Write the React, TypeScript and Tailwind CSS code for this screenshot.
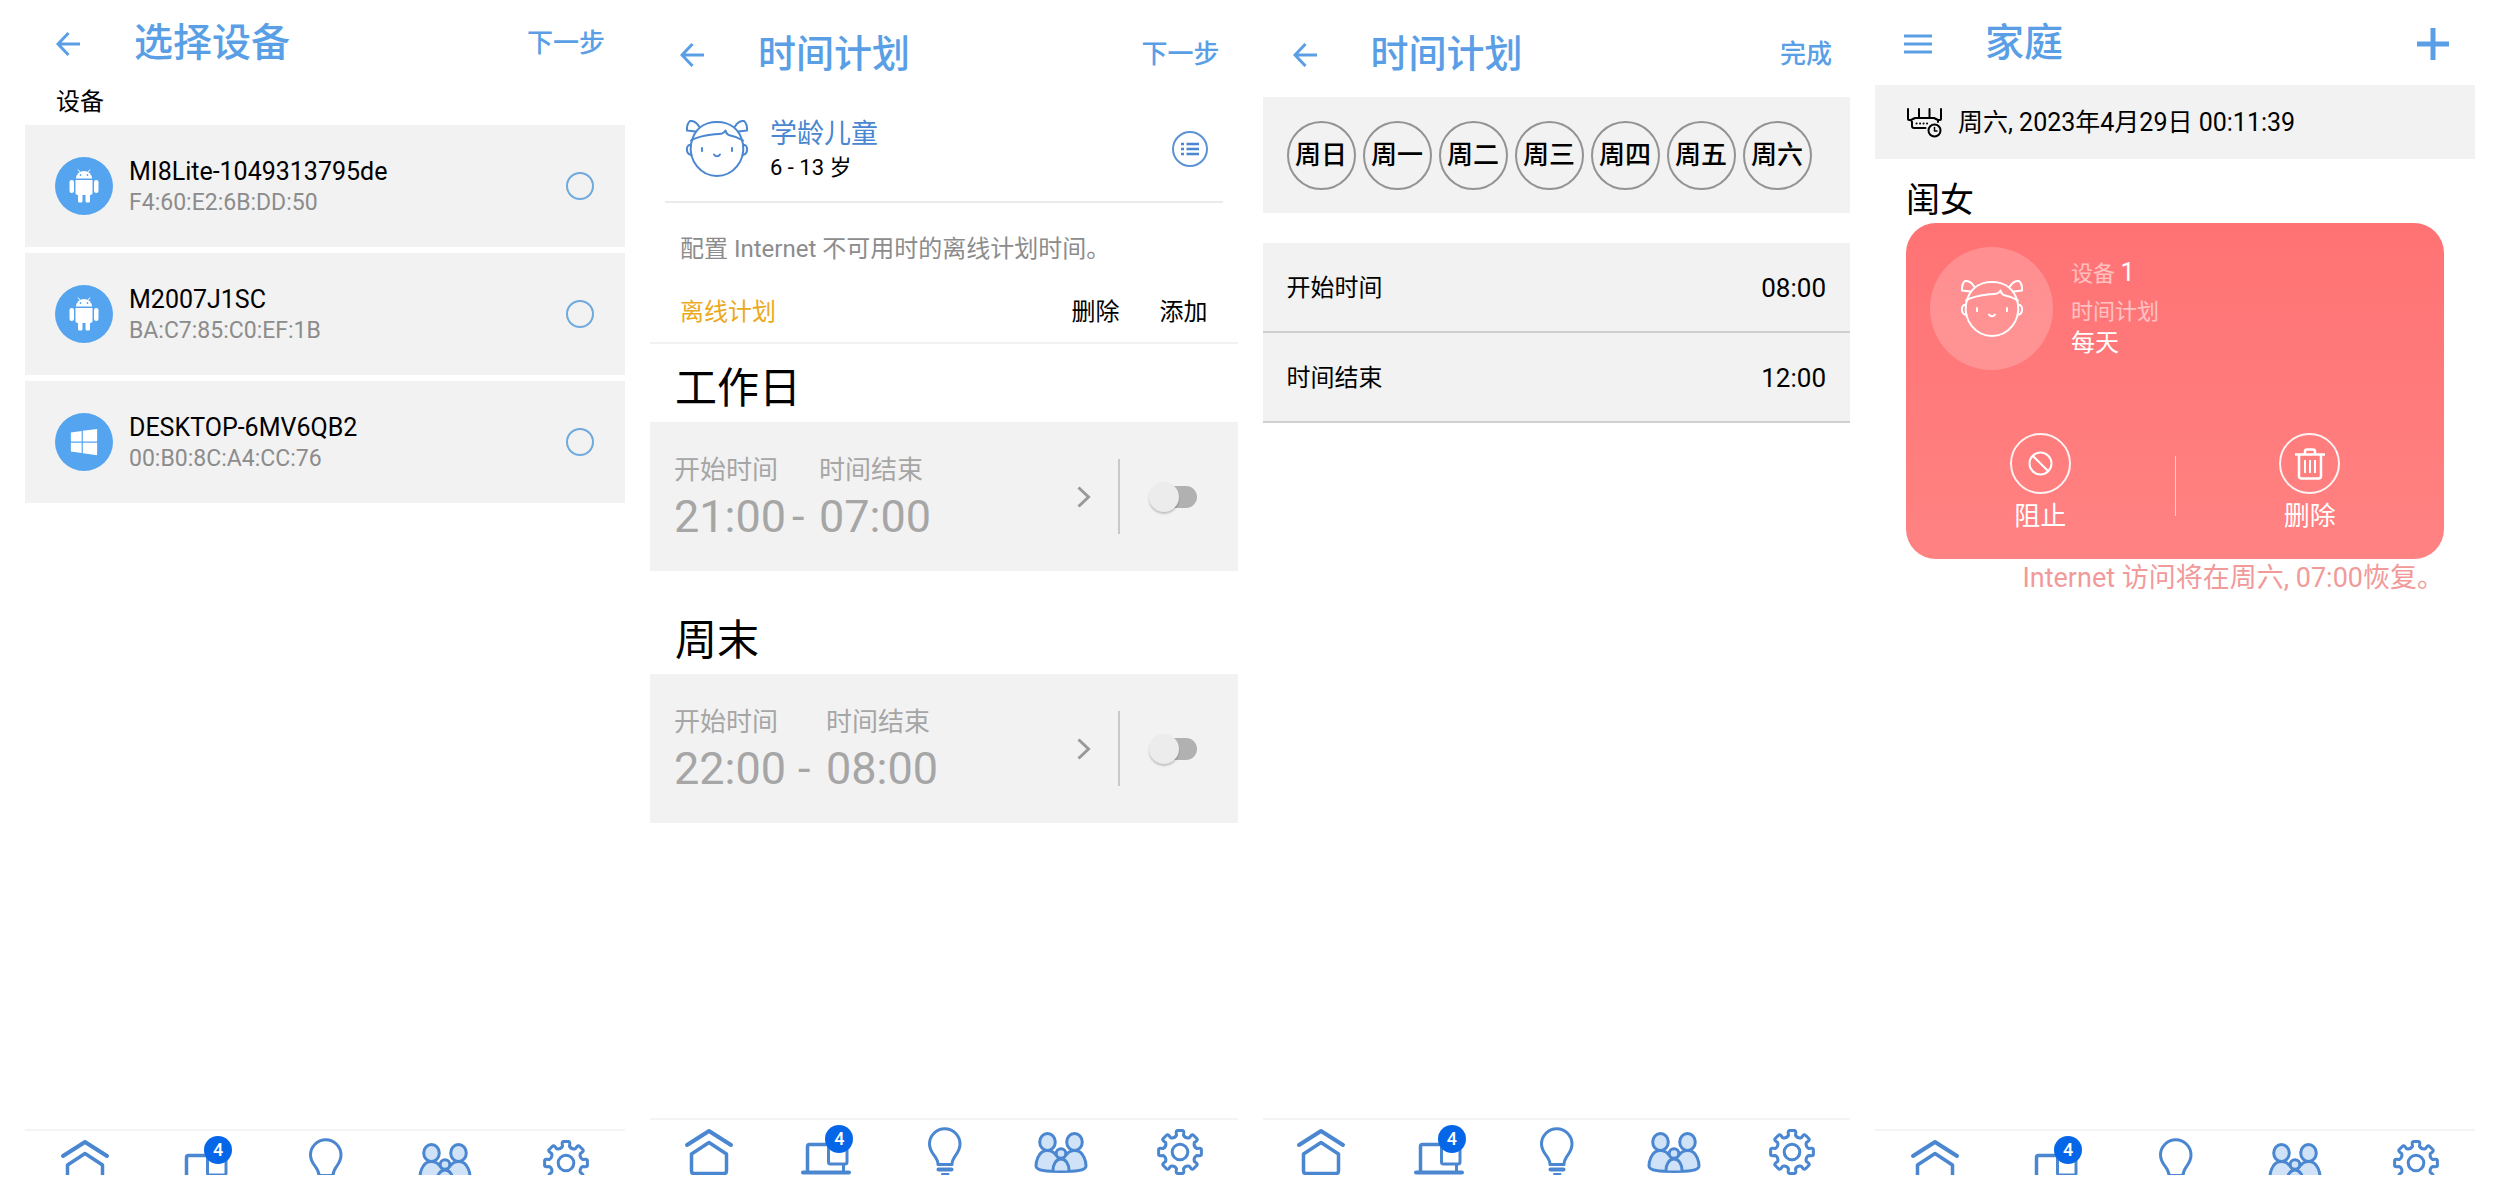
import { useState } from "react";
import type { ReactNode } from "react";
import clsx from "clsx";
import { FaWindows } from "react-icons/fa";

const devices = [
  { id: "d1", name: "MI8Lite-1049313795de", mac: "F4:60:E2:6B:DD:50", os: "android" },
  { id: "d2", name: "M2007J1SC", mac: "BA:C7:85:C0:EF:1B", os: "android" },
  { id: "d3", name: "DESKTOP-6MV6QB2", mac: "00:B0:8C:A4:CC:76", os: "windows" },
];

const plans = [
  { id: "workday", title: "工作日", start: "21:00", end: "07:00", cols: "grid-cols-[118px_27px_auto]" },
  { id: "weekend", title: "周末", start: "22:00", end: "08:00", cols: "grid-cols-[124px_28px_auto]" },
];

const weekdays = ["周日", "周一", "周二", "周三", "周四", "周五", "周六"];

// 8-tooth gear outline around (31, 25)
const gearPath = (() => {
  const pts: string[] = [];
  const at = (r: number, deg: number) => {
    const a = (deg * Math.PI) / 180;
    return `${(31 + r * Math.sin(a)).toFixed(2)} ${(25 - r * Math.cos(a)).toFixed(2)}`;
  };
  for (let i = 0; i < 8; i++) {
    const d = i * 45;
    pts.push(`${i ? "L" : "M"}${at(17, d - 12)} L${at(20, d - 11)} Q${at(21.8, d - 10)} ${at(21.5, d - 6)}`);
    pts.push(`L${at(21.5, d + 6)} Q${at(21.8, d + 10)} ${at(20, d + 11)} L${at(17, d + 12)}`);
    pts.push(`Q${at(14.5, d + 22.5)} ${at(17, d + 33)}`);
  }
  return pts.join(" ") + "Z";
})();

function BackIcon() {
  return (
    <svg width="24" height="24" viewBox="0 0 24 24" fill="none" stroke="currentColor" strokeWidth="3">
      <path d="M12.5 1 2 12l10.5 11M2 12h22" />
    </svg>
  );
}

function AndroidIcon() {
  return (
    <svg width="30" height="34" viewBox="0 0 30 34" fill="white">
      <path d="M7 9.500a8 7.500 0 0 1 16 0Z" />
      <path d="M9 0.500 11 3.500M21 0.500 19 3.500" stroke="white" strokeWidth="1" />
      <path d="M6.500 11h17v13q0 2-2 2h-13q-2 0-2-2Z" />
      <rect x="0.500" y="11" width="4.500" height="13" rx="2.200" />
      <rect x="25" y="11" width="4.500" height="13" rx="2.200" />
      <rect x="9" y="24" width="4.500" height="9.500" rx="1.500" />
      <rect x="16.500" y="24" width="4.500" height="9.500" rx="1.500" />
      <circle cx="11.500" cy="6" r="0.900" fill="#55a4f0" />
      <circle cx="18.500" cy="6" r="0.900" fill="#55a4f0" />
    </svg>
  );
}

function GirlFace() {
  return (
    <svg width="64" height="58" viewBox="0 0 64 58" fill="none" stroke="currentColor" strokeWidth="2" strokeLinejoin="round" strokeLinecap="round">
      <path d="M6 24C9 9 19 2 32 2s23 7 26 22c2.500 17-10 32-26 32S3.500 41 6 24Z" />
      <path d="M6 20.500C16 14.500 27 15 37 13.500q2-.5 3.500-3 .5 3 3 4.500C49 16 54 18 58 20.500" />
      <path d="M5.500 25C1 24 0 34 6.500 35M58.500 25c4.500-1 5.500 9-1 10" />
      <path d="M10.500 11.500 2 10.500Q1.500 4 5 1q5.500-.5 9 5.500M53.500 11.500l8.500-1Q62.500 4 59 1q-5.500-.5-9 5.500" />
      <path d="M17 28v3M47 28v3M29 34.500c1.500 2.300 4.500 2.300 6 0" />
    </svg>
  );
}

function RouterClockIcon() {
  return (
    <svg width="36" height="30" viewBox="0 0 36 30" fill="none" stroke="black" strokeWidth="2" strokeLinecap="round" strokeLinejoin="round">
      <path d="M1 1v10q0 1 1 1h2M12 1v8M22.500 1v8M34 1v10q0 1-1 1h-2" />
      <path d="M18.500 20H7q-2 0-2-2v-4l-1-2 4-2h19l4 2v2" />
      <path d="M9.500 15.500h.1M13 15.500h.1M16.500 15.500h.1M20 15.500h.1" />
      <circle cx="27.500" cy="22.500" r="6" />
      <path d="M27.500 19.500v3.500h2.500" strokeWidth="1.500" />
    </svg>
  );
}

const navStroke = {
  width: 60,
  height: 50,
  viewBox: "0 0 60 50",
  fill: "none",
  stroke: "#4a87d0",
  strokeWidth: 3,
  strokeLinecap: "round",
  strokeLinejoin: "round",
} as const;

const navItems: { label: string; icon: ReactNode; badge?: number }[] = [
  {
    label: "首页",
    icon: (
      <svg {...navStroke}>
        <path d="M8 18 30 4l22 14" strokeWidth="4" />
        <path d="M30 15.500 47.500 27v17q0 2.500-2.500 2.500H15q-2.500 0-2.500-2.500V27Z" strokeWidth="3.500" />
      </svg>
    ),
  },
  {
    label: "设备",
    badge: 4,
    icon: (
      <svg {...navStroke}>
        <path d="M11.500 44V19.500q0-2 2-2H32" strokeWidth="3.500" />
        <path d="M7 45.500h46" strokeWidth="4" />
        <path d="M32.500 18v17q0 2 2 2H49q2 0 2-2V18M47.500 38v6" />
      </svg>
    ),
  },
  {
    label: "智能",
    icon: (
      <svg {...navStroke}>
        <path d="M24 37.500C24 29 15.500 27 15.500 17a15.200 15.200 0 0 1 30.500 0c0 10-8 12-8 20.500Z" />
        <path d="M24.500 42.500h13" strokeWidth="4" />
        <path d="M28 47h6.500" strokeWidth="2" />
      </svg>
    ),
  },
  {
    label: "家庭",
    icon: (
      <svg {...navStroke} fill="#cfe2f8">
        <path d="M11 25c-3 2-6 8-6 14 0 5 12 5.500 25 5.500S55 44 55 39c0-6-3-12-6-14q-5-3-11 0l-8 8-8-8q-6-3-11 0Z" />
        <ellipse cx="16.500" cy="15" rx="7.800" ry="8.500" />
        <ellipse cx="43.500" cy="15" rx="7.800" ry="8.500" />
        <circle cx="30" cy="26.500" r="4.800" />
        <path d="M22 43.500c0-6 3-11.500 8-11.500s8 5.500 8 11.500" />
      </svg>
    ),
  },
  {
    label: "设置",
    icon: (
      <svg {...navStroke}>
        <path d={gearPath} strokeWidth="3" />
        <circle cx="31" cy="25" r="7.800" />
      </svg>
    ),
  },
];

function BottomNav({ short }: { short?: boolean }) {
  return (
    <nav className={clsx("mt-auto grid shrink-0 grid-cols-5 items-start overflow-hidden border-t-2 border-[#f4f4f4] pt-[7px]", short ? "h-[46px]" : "h-[57px]")}>
      {navItems.map((item) => (
        <button key={item.label} type="button" aria-label={item.label} className="relative mx-auto block w-[60px]">
          {item.icon}
          {item.badge && (
            <span className="absolute -top-0.5 right-[3px] flex size-7 items-center justify-center rounded-full bg-[#0566e8] text-lg font-medium text-white">
              {item.badge}
            </span>
          )}
        </button>
      ))}
    </nav>
  );
}

function Header({ title, action, low }: { title: string; action: string; low?: boolean }) {
  return (
    <header className={clsx("flex shrink-0 items-center text-[#5a9fe6]", low ? "h-[97px] pt-3 pr-[18px] pl-[30px]" : "h-[85px] pt-0.5 pr-5 pl-[31px]")}>
      <button type="button" aria-label="返回">
        <BackIcon />
      </button>
      <h1 className={clsx("ml-[54px] font-medium", low ? "text-[38px]" : "text-[39px]")}>{title}</h1>
      <button type="button" className="ml-auto text-[26px] font-medium">
        {action}
      </button>
    </header>
  );
}

function SelectDevice() {
  const [selected, setSelected] = useState("");

  return (
    <section className="flex min-w-0 flex-col">
      <Header title="选择设备" action="下一步" />
      <h2 className="pb-1.5 pl-[31px] text-2xl leading-[34px]">设备</h2>
      <div className="flex flex-col gap-1.5">
        {devices.map((d) => (
          <label key={d.id} className="flex h-[122px] items-center bg-[#f2f2f2] pr-[31px] pl-[30px]">
            <span className="flex size-[58px] items-center justify-center rounded-full bg-[#55a4f0] text-white">
              {d.os === "android" ? <AndroidIcon /> : <FaWindows size={30} />}
            </span>
            <span className="ml-4 flex flex-col pt-0.5">
              <span className="text-[25px] leading-[31px]">{d.name}</span>
              <span className="text-[23px] leading-[31px] text-[#8c8c8c]">{d.mac}</span>
            </span>
            <input
              type="radio"
              name="device"
              checked={selected === d.id}
              onChange={() => setSelected(d.id)}
              className="ml-auto size-7 appearance-none rounded-full border-2 border-[#6fa9df] checked:bg-[#6fa9df]"
            />
          </label>
        ))}
      </div>
      <BottomNav short />
    </section>
  );
}

function PlanCard({ plan }: { plan: (typeof plans)[number] }) {
  const [on, setOn] = useState(false);

  return (
    <div className="mb-[25px]">
      <h2 className="h-[78px] pt-[15px] pl-[25px] text-[42px] leading-[60px]">{plan.title}</h2>
      <div className="flex h-[149px] items-center bg-[#f2f2f2] pr-[41px] pl-6 text-[#a6a6a6]">
        <div className={clsx("grid items-center", plan.cols)}>
          <span className="col-span-2 text-[26px] leading-10">开始时间</span>
          <span className="text-[26px] leading-10">时间结束</span>
          <span className="text-[45px] leading-[54px]">{plan.start}</span>
          <span className="text-[45px] leading-[54px]">-</span>
          <span className="text-[45px] leading-[54px]">{plan.end}</span>
        </div>
        <button type="button" aria-label={`编辑${plan.title}`} className="ml-auto">
          <svg width="14" height="22" viewBox="0 0 14 22" fill="none" stroke="#999" strokeWidth="3">
            <path d="m1.500 1.500 10 9.500-10 9.500" />
          </svg>
        </button>
        <div className="ml-[27px] h-[75px] w-0.5 bg-[#c9c9c9]" />
        <input
          type="checkbox"
          role="switch"
          aria-label={plan.title}
          checked={on}
          onChange={(e) => setOn(e.target.checked)}
          className="relative ml-[33px] h-[22px] w-11 appearance-none rounded-full bg-[#b1b1b1] before:absolute before:-top-1 before:-left-1 before:size-[30px] before:rounded-full before:bg-[#ececec] before:shadow-[0_2px_2px_rgba(0,0,0,0.2)] checked:bg-[#8fbff0] checked:before:left-[18px]"
        />
      </div>
    </div>
  );
}

function TimePlan() {
  return (
    <section className="flex min-w-0 flex-col">
      <Header title="时间计划" action="下一步" low />
      <div className="mx-[15px] flex h-[106px] items-center border-b-2 border-[#ebebeb] pr-[15px] pl-5">
        <span className="text-[#4a87d0]">
          <GirlFace />
        </span>
        <div className="ml-[21px] pt-1">
          <p className="text-[27px] leading-[33px] text-[#4a87d0]">学龄儿童</p>
          <p className="text-[22px] leading-[33px]">6 - 13 岁</p>
        </div>
        <button type="button" aria-label="选择年龄段" className="ml-auto flex size-9 items-center justify-center rounded-full border-2 border-[#5b93d6]">
          <svg width="18" height="14" viewBox="0 0 18 14" stroke="#4a87d0" strokeWidth="2.500">
            <path d="M0 2h3M5.500 2H18M0 7h3M5.500 7H18M0 12h3M5.500 12H18" />
          </svg>
        </button>
      </div>
      <p className="mt-[30px] px-[30px] text-2xl leading-8 text-[#8c8c8c]">配置 Internet 不可用时的离线计划时间。</p>
      <div className="mt-[31px] flex gap-10 border-b-2 border-[#f1f1f1] px-[30px] pb-3.5 text-2xl leading-8">
        <h2 className="mr-auto text-[#eba91c]">离线计划</h2>
        <button type="button">删除</button>
        <button type="button">添加</button>
      </div>
      {plans.map((p) => (
        <PlanCard key={p.id} plan={p} />
      ))}
      <BottomNav />
    </section>
  );
}

function CustomPlan() {
  const [days, setDays] = useState<string[]>([]);

  const toggle = (day: string) =>
    setDays((prev) => (prev.includes(day) ? prev.filter((d) => d !== day) : [...prev, day]));

  return (
    <section className="flex min-w-0 flex-col">
      <Header title="时间计划" action="完成" low />
      <div className="flex gap-[7px] bg-[#f2f2f2] px-6 pt-6 pb-[23px]">
        {weekdays.map((day) => (
          <button
            key={day}
            type="button"
            aria-pressed={days.includes(day)}
            onClick={() => toggle(day)}
            className="flex size-[69px] shrink-0 items-center justify-center rounded-full border-2 border-[#939393] text-[26px] font-medium aria-pressed:bg-[#cfe2f8]"
          >
            {day}
          </button>
        ))}
      </div>
      <div className="mt-[30px] bg-[#f2f2f2]">
        {[
          ["开始时间", "08:00"],
          ["时间结束", "12:00"],
        ].map(([label, value]) => (
          <button key={label} type="button" className="flex h-[90px] w-full items-center justify-between border-b-2 border-[#cfcfcf] px-6 pt-0.5">
            <span className="text-2xl">{label}</span>
            <span className="text-[26px]">{value}</span>
          </button>
        ))}
      </div>
      <BottomNav />
    </section>
  );
}

function Family() {
  return (
    <section className="flex min-w-0 flex-col">
      <header className="flex h-[85px] shrink-0 items-center pt-0.5 pr-[26px] pl-[29px] text-[#5a9fe6]">
        <button type="button" aria-label="菜单">
          <svg width="28" height="20" viewBox="0 0 28 20" stroke="currentColor" strokeWidth="3">
            <path d="M0 2h28M0 10h28M0 18h28" />
          </svg>
        </button>
        <h1 className="ml-[53px] text-[39px] font-medium">家庭</h1>
        <button type="button" aria-label="添加" className="ml-auto">
          <svg width="32" height="32" viewBox="0 0 32 32" stroke="currentColor" strokeWidth="5">
            <path d="M16 0v32M0 16h32" />
          </svg>
        </button>
      </header>
      <div className="flex h-[74px] items-center gap-[15px] bg-[#f2f2f2] pt-0.5 pl-8 text-[25px]">
        <RouterClockIcon />
        <span>周六, 2023年4月29日 00:11:39</span>
      </div>
      <div className="mx-[31px] mt-[18px]">
        <h2 className="text-[34px] leading-[46px]">闺女</h2>
        <div className="flex h-[336px] flex-col rounded-[30px] bg-linear-to-b from-[#ff7274] to-[#ff8282] pt-6 pb-[21px] text-white">
          <div className="flex gap-[18px] px-6">
            <div className="flex size-[123px] items-center justify-center rounded-full bg-white/20">
              <GirlFace />
            </div>
            <div className="pt-2">
              <p className="text-[22px] leading-9 text-white/55">
                设备 <span className="text-[25px] text-white">1</span>
              </p>
              <p className="pt-1 text-[22px] leading-8 text-white/55">时间计划</p>
              <p className="text-2xl leading-[30px]">每天</p>
            </div>
          </div>
          <div className="mt-auto flex items-center text-[26px]">
            <button type="button" className="flex flex-1 flex-col items-center">
              <span className="flex size-[61px] items-center justify-center rounded-full border-2 border-white/90">
                <svg width="25" height="25" viewBox="0 0 25 25" fill="none" stroke="currentColor" strokeWidth="2">
                  <circle cx="12.500" cy="12.500" r="11" />
                  <path d="m4.700 4.700 15.600 15.600" />
                </svg>
              </span>
              <span className="leading-[44px]">阻止</span>
            </button>
            <div className="h-[60px] w-px bg-white/60" />
            <button type="button" className="flex flex-1 flex-col items-center">
              <span className="flex size-[61px] items-center justify-center rounded-full border-2 border-white/90">
                <svg width="30" height="32" viewBox="0 0 30 32" fill="none" stroke="currentColor" strokeWidth="2.500">
                  <path d="M0 6.500h30M10 6V3.500q0-2 2-2h6q2 0 2 2V6M4 7v21q0 2.500 2.500 2.500h17q2.500 0 2.500-2.500V7" />
                  <path d="M10 12v13M15 12v13M20 12v13" strokeWidth="2" />
                </svg>
              </span>
              <span className="leading-[44px]">删除</span>
            </button>
          </div>
        </div>
        <p className="text-right text-[27px] leading-[38px] text-[#f29a9a]">Internet 访问将在周六, 07:00恢复。</p>
      </div>
      <BottomNav short />
    </section>
  );
}

export default function App() {
  return (
    <main
      lang="zh-CN"
      className="grid min-h-screen grid-cols-[48fr_47fr_47fr_48fr] gap-[25px] bg-white px-[25px] pb-[25px] font-['Roboto','Noto_Sans_CJK_SC',sans-serif] text-black"
    >
      <SelectDevice />
      <TimePlan />
      <CustomPlan />
      <Family />
    </main>
  );
}
